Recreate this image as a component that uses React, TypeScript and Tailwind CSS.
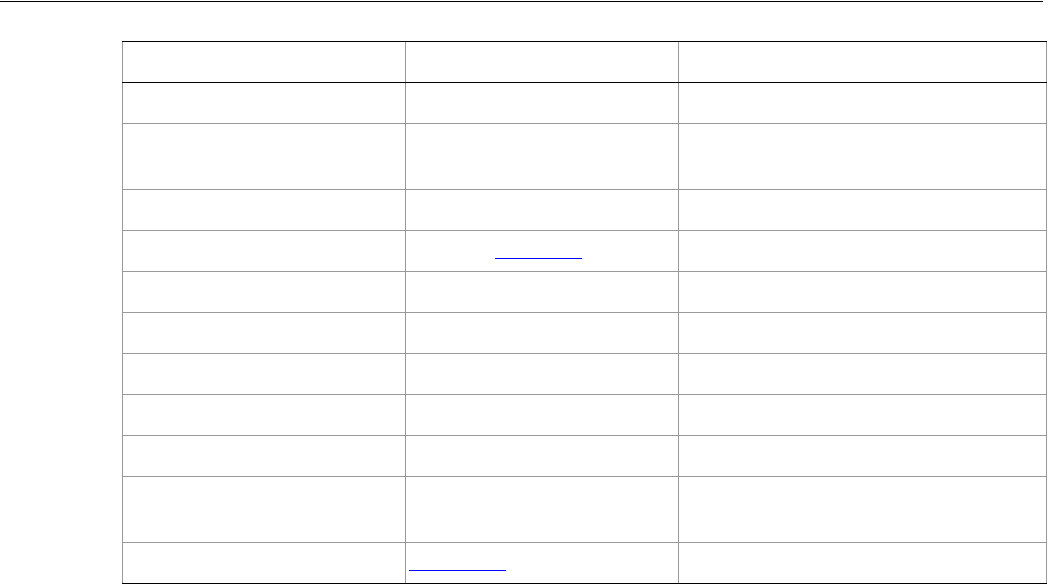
const rows: { tall?: boolean; link?: { ml: string; w: string } }[] = [
  {},
  { tall: true },
  {},
  { link: { ml: "ml-[89px]", w: "w-[87px]" } },
  {},
  {},
  {},
  {},
  {},
  { tall: true },
  { link: { ml: "ml-[3px]", w: "w-[97px]" } },
]

export default function App() {
  return (
    <div className="w-[1048px] h-[584px] bg-white overflow-hidden font-['Liberation_Sans',Arial,sans-serif] text-black">
      {/* page rule */}
      <div className="mt-px h-px w-[1043px] bg-black" />

      {/* table */}
      <div className="ml-[122px] mt-[39px] w-[925px] border-t border-black">
        {/* header */}
        <div className="grid grid-cols-[283px_273px_369px] h-[41px] border-b border-black">
          <div className="border-l border-[#999999]" />
          <div className="border-l border-[#999999]" />
          <div className="border-l border-r border-[#999999]" />
        </div>

        {rows.map((r, i) => {
          const last = i === rows.length - 1
          return (
            <div
              key={i}
              className={`grid grid-cols-[283px_273px_369px] border-b ${r.tall ? "h-[66px]" : "h-[41px]"} ${last ? "border-black" : "border-[#999999]"}`}
            >
              <div className="border-l border-[#999999]" />
              <div className="border-l border-[#999999] pt-[27px]">
                {r.link && <a href="#" className={`block h-px bg-[#0000ff] ${r.link.ml} ${r.link.w}`} />}
              </div>
              <div className="border-l border-r border-[#999999]" />
            </div>
          )
        })}
      </div>
    </div>
  )
}
